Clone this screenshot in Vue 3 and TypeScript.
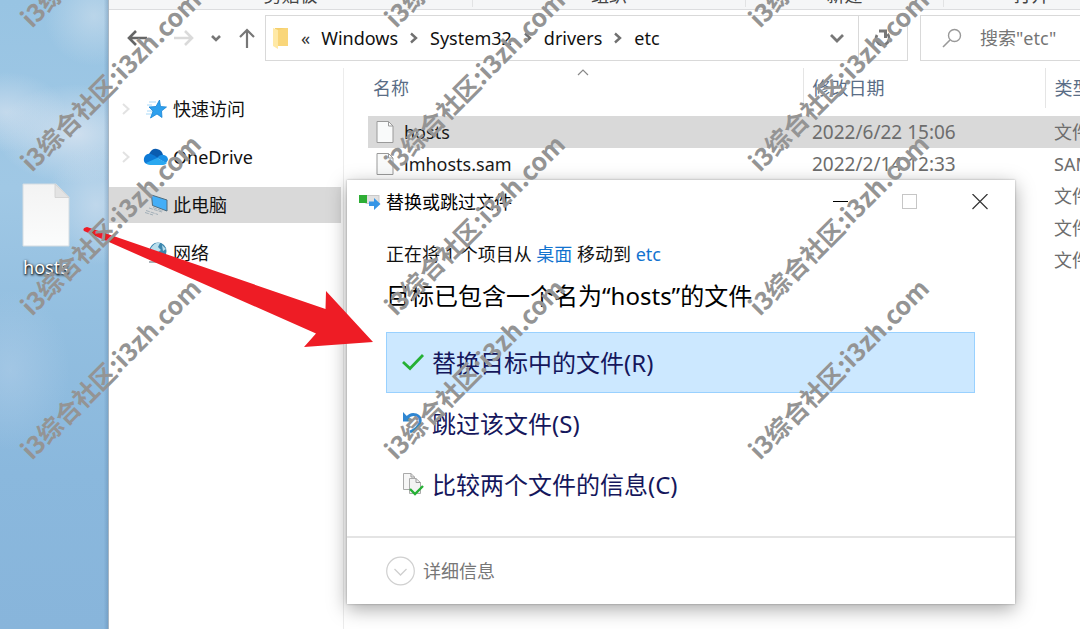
<script setup lang="ts">
interface TreeItem {
  label: string
  icon: 'star' | 'cloud' | 'pc' | 'net'
  expandable: boolean
  active: boolean
}
interface FileRow {
  name: string
  date: string
  type: string
}

const groups: string[] = ['剪贴板', '组织', '新建', '打开']
const crumbs: string[] = ['Windows', 'System32', 'drivers', 'etc']

const tree: TreeItem[] = [
  { label: '快速访问', icon: 'star', expandable: true, active: false },
  { label: 'OneDrive', icon: 'cloud', expandable: true, active: false },
  { label: '此电脑', icon: 'pc', expandable: false, active: true },
  { label: '网络', icon: 'net', expandable: false, active: false },
]

const files: FileRow[] = [
  { name: 'hosts', date: '2022/6/22 15:06', type: '文件' },
  { name: 'lmhosts.sam', date: '2022/2/14 12:33', type: 'SAM 文件' },
  { name: '', date: '', type: '文件' },
  { name: '', date: '', type: '文件' },
  { name: '', date: '', type: '文件' },
]

const markText = 'i3综合社区:i3zh.com'
const marks = [0, 1, 2].flatMap((c) =>
  [0, 1, 2, 3].map((r) => ({ x: 32 + c * 364, y: 29 + r * 144 })),
)
</script>

<template>
  <div class="desktop">
    <aside class="wallpaper">
      <a class="shortcut" href="#">
        <svg width="48" height="64" viewBox="0 0 48 64" aria-hidden="true">
          <defs>
            <linearGradient id="paper" x1="0" y1="0" x2="0" y2="1">
              <stop offset="0" stop-color="#f3f3f3" />
              <stop offset="1" stop-color="#fbfcfc" />
            </linearGradient>
          </defs>
          <path d="M1 1H34L47 14V63H1Z" fill="url(#paper)" stroke="#d5dde2" />
          <path d="M33 1V14.500H47Z" fill="#e3e3e3" stroke="#cfcfcf" stroke-width=".8" />
        </svg>
        <span>hosts</span>
      </a>
    </aside>

    <main class="explorer">
      <div class="ribbon">
        <span v-for="g in groups" :key="g">{{ g }}</span>
      </div>

      <div class="toolbar">
        <nav class="history">
          <button type="button" aria-label="后退">
            <svg width="22" height="22" viewBox="0 0 22 22"><path d="M21 11H3M10 4L3 11L10 18" fill="none" stroke="#666" stroke-width="2.600" /></svg>
          </button>
          <button type="button" aria-label="前进">
            <svg width="22" height="22" viewBox="0 0 22 22"><path d="M1 11H19M12 4L19 11L12 18" fill="none" stroke="#dadada" stroke-width="2.600" /></svg>
          </button>
          <button type="button" class="small" aria-label="最近位置">
            <svg width="12" height="12" viewBox="0 0 12 12"><path d="M2 4L6 8L10 4" fill="none" stroke="#777" stroke-width="2.600" /></svg>
          </button>
          <button type="button" aria-label="上移">
            <svg width="20" height="22" viewBox="0 0 20 22"><path d="M10 21V3M3 10L10 3L17 10" fill="none" stroke="#777" stroke-width="2.200" /></svg>
          </button>
        </nav>
        <div class="address">
          <svg class="folder" width="18" height="24" viewBox="0 0 18 24" aria-hidden="true">
            <path d="M3 2H16V20H3Z" fill="#f5cf6c" />
            <path d="M1 2L6 4V23L1 20Z" fill="#ffe9a6" />
            <path d="M6 4L13 2H16V20H6Z" fill="#f9d67a" />
          </svg>
          <span class="more">«</span>
          <template v-for="(c, i) in crumbs" :key="c">
            <svg v-if="i > 0" class="sep" width="8" height="12" viewBox="0 0 8 12" aria-hidden="true"><path d="M1 1.500L6 6L1 10.500" fill="none" stroke="#707070" stroke-width="2.400" /></svg>
            <a href="#">{{ c }}</a>
          </template>
          <button type="button" class="drop" aria-label="以前的位置">
            <svg width="16" height="12" viewBox="0 0 16 12"><path d="M2 3L8 9L14 3" fill="none" stroke="#777" stroke-width="2.800" /></svg>
          </button>
          <button type="button" class="refresh" aria-label="刷新">
            <svg width="20" height="20" viewBox="0 0 20 20"><path d="M4 7A6.500 6.500 0 1 0 14.500 6" fill="none" stroke="#777" stroke-width="2.800" /><path d="M6 3H12.500V10" fill="none" stroke="#777" stroke-width="3" /></svg>
          </button>
        </div>
        <label class="search">
          <svg width="20" height="20" viewBox="0 0 20 20" aria-hidden="true"><circle cx="12.500" cy="7.500" r="6" fill="none" stroke="#999" stroke-width="1.400" /><path d="M8 12L1 19" stroke="#999" stroke-width="1.600" /></svg>
          <input type="search" placeholder="搜索&quot;etc&quot;" aria-label="搜索" />
        </label>
      </div>

      <div class="body">
        <ul class="tree">
          <li v-for="t in tree" :key="t.label" :class="{ active: t.active }">
            <svg class="twisty" width="10" height="14" viewBox="0 0 10 14" aria-hidden="true">
              <path v-if="t.expandable" d="M2 2L7.500 7L2 12" fill="none" stroke="#e2e2e2" stroke-width="2" />
            </svg>
            <svg v-if="t.icon === 'star'" class="ico" width="26" height="22" viewBox="0 0 26 22" aria-hidden="true">
              <path d="M16.500 2L17.500 8.500L23.500 9L18.500 13L19 19.500L14 16L7.500 20L10 13L6 9L13 8.500Z" fill="#2da0ee" stroke="#1784d6" stroke-width=".8" />
              <path d="M6 4H13M4 7H9M4 13H9M3 16H8" stroke="#a8d9f8" />
            </svg>
            <svg v-else-if="t.icon === 'cloud'" class="ico" width="26" height="22" viewBox="0 0 26 22" aria-hidden="true">
              <path d="M6 8Q9 2 14 3Q19 4 20 9L13 13Z" fill="#0a5cb0" />
              <path d="M4 18Q0 17 1 12Q3 7 8 8Q11 9 15 12L9 18Z" fill="#0d7ad6" />
              <path d="M14 12Q17 8 21 9Q25 10 25 14L23 17Z" fill="#1a90e6" />
              <path d="M3 17L14 12L24 17Q22 19 20 19H7Q4 19 3 17Z" fill="#2aa8f0" />
            </svg>
            <svg v-else-if="t.icon === 'pc'" class="ico" width="26" height="22" viewBox="0 0 26 22" aria-hidden="true">
              <path d="M8.500 1L24 6V17L9.500 11.500Z" fill="#44aef7" stroke="#506b7c" />
              <path d="M6 14L19 18M3 16.500L15 20.500M10 13.500L20 17M2 18.500L10 21" stroke="#a2afb8" stroke-width="1" stroke-dasharray="4 1" />
            </svg>
            <svg v-else class="ico" width="26" height="22" viewBox="0 0 26 22" aria-hidden="true">
              <circle cx="15" cy="9" r="8.500" fill="#3b86ae" />
              <path d="M8 6Q12 0 17 1L15 5L18 8L12 12L7 10ZM19 3L23 7L20 9Z" fill="#b9deec" />
              <path d="M6 20H14" stroke="#aab4ba" stroke-width="2" />
            </svg>
            <a href="#">{{ t.label }}</a>
          </li>
        </ul>

        <section class="listing">
          <table>
            <colgroup>
              <col />
              <col class="c-date" />
              <col class="c-type" />
            </colgroup>
            <thead>
              <tr>
                <th>名称
                  <svg class="sort" width="12" height="7" viewBox="0 0 12 7" aria-hidden="true"><path d="M1 6L6 1L11 6" fill="none" stroke="#888" stroke-width="1.200" /></svg>
                </th>
                <th>修改日期</th>
                <th>类型</th>
              </tr>
            </thead>
            <tbody>
              <tr v-for="(f, i) in files" :key="i" :class="{ selected: i === 0 }">
                <td>
                  <div v-if="f.name" class="file">
                    <svg width="18" height="22" viewBox="0 0 18 22" aria-hidden="true">
                      <path d="M1 .5H12.500L17 5V21.500H1Z" fill="#f9fafa" stroke="#9a9a9a" />
                      <path d="M12.500 .5V5H17" fill="none" stroke="#9a9a9a" />
                    </svg>
                    <span>{{ f.name }}</span>
                  </div>
                </td>
                <td class="date">{{ f.date }}</td>
                <td>{{ f.type }}</td>
              </tr>
            </tbody>
          </table>
        </section>
      </div>
    </main>

    <section class="dialog" role="dialog" aria-labelledby="dlg-title">
      <header>
        <svg width="24" height="18" viewBox="0 0 24 18" aria-hidden="true">
          <rect x="8" y="2.500" width="13" height="8" fill="#e1e1e1" stroke="#c9c9c9" />
          <rect x="1" y="2" width="8" height="8" fill="#2eae35" />
          <path d="M11 8.500H16V5L22.500 11L16 17V13H11Z" fill="#3796e6" />
        </svg>
        <span id="dlg-title">替换或跳过文件</span>
        <div class="controls">
          <button type="button" aria-label="最小化"><svg width="16" height="16" viewBox="0 0 16 16"><path d="M1 7.500H16" stroke="#000" /></svg></button>
          <button type="button" aria-label="最大化" disabled><svg width="16" height="16" viewBox="0 0 16 16"><rect x=".5" y=".5" width="14" height="14" fill="none" stroke="#c6c6c6" /></svg></button>
          <button type="button" aria-label="关闭"><svg width="16" height="16" viewBox="0 0 16 16"><path d="M.5 0L15.500 15M15.500 0L.5 15" stroke="#333" stroke-width="1.200" /></svg></button>
        </div>
      </header>
      <div class="content">
        <p>正在将 1 个项目从 <a href="#">桌面</a> 移动到 <a href="#">etc</a></p>
        <h1>目标已包含一个名为“hosts”的文件</h1>
        <div class="options">
          <button type="button" class="primary">
            <svg width="24" height="24" viewBox="0 0 24 24" aria-hidden="true"><path d="M2 11L9 17.500L22 4" fill="none" stroke="#25b034" stroke-width="2.800" /></svg>
            <span>替换目标中的文件(R)</span>
          </button>
          <button type="button">
            <svg width="24" height="24" viewBox="0 0 24 24" aria-hidden="true"><path d="M6 6Q10 1 15 3Q20 5 19 10Q18 16 9 20" fill="none" stroke="#2f86d2" stroke-width="3" /><path d="M2 0V9.500H11Z" fill="#2f86d2" /></svg>
            <span>跳过该文件(S)</span>
          </button>
          <button type="button">
            <svg width="24" height="24" viewBox="0 0 24 24" aria-hidden="true">
              <path d="M2.500 .5H10L13.500 4V16.500H2.500Z" fill="#f6f6f6" stroke="#aaa" />
              <path d="M8.500 5.500H15L19.500 9.500V20.500H8.500Z" fill="#f3f3f3" stroke="#aaa" />
              <path d="M10 .5V4H13.500M15 5.500V9.500H19.500" fill="none" stroke="#999" />
              <path d="M9 16L14 21L22 13" fill="none" stroke="#25b034" stroke-width="2.400" />
            </svg>
            <span>比较两个文件的信息(C)</span>
          </button>
        </div>
      </div>
      <footer>
        <button type="button">
          <svg width="30" height="30" viewBox="0 0 30 30" aria-hidden="true"><circle cx="14.500" cy="15" r="13.800" fill="none" stroke="#d0d0d0" stroke-width="1.200" /><path d="M8.500 13L14.500 19L20.500 13" fill="none" stroke="#cfcfcf" stroke-width="1.300" /></svg>
          <span>详细信息</span>
        </button>
      </footer>
    </section>

    <svg class="overlay" aria-hidden="true">
      <path d="M84 231Q82 228 87 227L112 235.500L325.500 309L326 291L373 342L304 347L316 333.500Z" fill="#ee1c25" />
      <text v-for="m in marks" :key="m.x + '-' + m.y" class="mark" :transform="`translate(${m.x} ${m.y}) rotate(-45)`">{{ markText }}</text>
    </svg>
  </div>
</template>

<style>
body {
  margin: 0;
}
</style>

<style scoped>
.desktop {
  position: relative;
  display: flex;
  min-height: 100vh;
  overflow: hidden;
  background: #fff;
  color: #111;
  font: 18px/24px "Noto Sans", "Noto Sans CJK SC", sans-serif;
}
button {
  display: flex;
  align-items: center;
  justify-content: center;
  border: 0;
  padding: 0;
  background: none;
  font: inherit;
  color: inherit;
}
a {
  color: inherit;
  text-decoration: none;
}
svg {
  display: block;
  flex: none;
}

.wallpaper {
  flex: none;
  box-sizing: border-box;
  width: 108px;
  padding-top: 183px;
  background:
    linear-gradient(90deg, transparent 96%, rgba(60, 100, 140, 0.25)),
    radial-gradient(50px 60px at 96px 205px, rgba(205, 222, 238, 0.7), transparent),
    radial-gradient(80px 50px at 76px 134px, rgba(215, 227, 240, 0.85), transparent),
    radial-gradient(60px 40px at 6px 112px, rgba(205, 222, 238, 0.8), transparent),
    radial-gradient(50px 50px at 94px 16px, rgba(200, 220, 236, 0.7), transparent),
    radial-gradient(60px 80px at 10px 370px, rgba(180, 208, 234, 0.5), transparent),
    linear-gradient(#98c4e3, #a0c8e5 30%, #93bfe0 50%, #8ab8dd 75%, #88b5db);
}
.shortcut {
  display: flex;
  flex-direction: column;
  align-items: center;
  gap: 8px;
  width: 92px;
  color: #fff;
  text-shadow: 1px 1px 3px #000, 0 1px 2px #222;
}

.explorer {
  flex: 1;
  min-width: 0;
  display: flex;
  flex-direction: column;
  border-left: 1px solid #a9b6c2;
}
.ribbon {
  display: grid;
  grid-template-columns: 364px 273px 198px 176px;
  grid-template-rows: 9px;
  align-items: end;
  height: 9px;
  overflow: hidden;
  background: #f5f6f7;
  border-bottom: 1px solid #dcdddf;
}
.ribbon span {
  margin-bottom: 2px;
  border-right: 1px solid #e2e3e4;
  text-align: center;
  color: #444;
}
.toolbar {
  display: flex;
  padding-top: 5px;
}
.history {
  flex: none;
  display: flex;
  align-items: center;
  gap: 15px;
  width: 156px;
  box-sizing: border-box;
  padding-left: 17px;
}
.history button:first-child {
  margin-right: 10px;
}
.address {
  flex: 1;
  min-width: 0;
  display: flex;
  align-items: center;
  gap: 11px;
  height: 44px;
  margin-right: 12px;
  padding-left: 6px;
  border: 1px solid #d9d9d9;
}
.more {
  color: #333;
}
.sep {
  margin: 0 1px;
}
.drop {
  margin-left: auto;
  width: 20px;
}
.refresh {
  width: 49px;
  height: 44px;
  border-left: 1px solid #d9d9d9;
}
.search {
  flex: none;
  width: 160px;
  box-sizing: border-box;
  display: flex;
  align-items: center;
  gap: 18px;
  padding-left: 21px;
  border: 1px solid #d9d9d9;
  border-right: 0;
}
.search input {
  min-width: 0;
  flex: 1;
  border: 0;
  padding: 0;
  background: none;
  font: inherit;
}
.search input::placeholder {
  color: #757575;
  opacity: 1;
}

.body {
  flex: 1;
  display: flex;
  padding-top: 7px;
}
.tree {
  flex: none;
  width: 234px;
  margin: 0;
  padding: 23px 0 0;
  list-style: none;
  border-right: 1px solid #ececec;
  display: flex;
  flex-direction: column;
  gap: 12px;
}
.tree li {
  display: flex;
  align-items: center;
  height: 36px;
  padding-left: 12px;
  margin-right: 2px;
}
.tree .active {
  background: #d9d9d9;
}
.tree .ico {
  margin: 0 4px 0 12px;
}
.listing {
  flex: 1;
  min-width: 0;
  padding-left: 24px;
}
table {
  width: 100%;
  table-layout: fixed;
  border-collapse: collapse;
}
.c-date {
  width: 242px;
}
.c-type {
  width: 35px;
}
th {
  position: relative;
  height: 40px;
  padding: 0 0 0 9px;
  font-weight: 400;
  text-align: left;
  color: #5a6d86;
  white-space: nowrap;
  overflow: hidden;
  border-right: 1px solid #e5e5e5;
}
th:first-child {
  padding-left: 5px;
}
th:last-child {
  border-right: 0;
}
.sort {
  position: absolute;
  top: 1px;
  left: 50%;
  margin-left: -8px;
}
thead::after {
  content: "";
  display: block;
  height: 8px;
}
td {
  height: 32px;
  padding: 0 0 0 9px;
  color: #6d6d6d;
  white-space: nowrap;
  overflow: hidden;
}
td:first-child {
  padding-left: 8px;
}
.date {
  font-size: 19px;
}
.selected {
  background: #d9d9d9;
}
.file {
  display: flex;
  gap: 10px;
  align-items: center;
  color: #1a1a1a;
}

.dialog {
  position: absolute;
  top: 180px;
  left: 347px;
  right: 65px;
  background: #fff;
  box-shadow: 0 0 2px rgba(0, 0, 0, 0.3), 0 5px 18px rgba(0, 0, 0, 0.35);
}
header {
  display: flex;
  align-items: center;
  gap: 4px;
  height: 44px;
  padding: 0 27px 0 11px;
  color: #000;
}
.controls {
  display: flex;
  gap: 54px;
  margin-left: auto;
}
.content {
  padding: 18px 40px 21px 39px;
  border-bottom: 2px solid #e4e4e4;
}
p,
h1 {
  margin: 0;
}
p a {
  color: #1273cf;
}
h1 {
  margin: 14px 0 20px;
  font-size: 24px;
  line-height: 32px;
  font-weight: 400;
  color: #000;
}
.options {
  display: flex;
  flex-direction: column;
}
.options button {
  justify-content: flex-start;
  gap: 7px;
  height: 61px;
  padding-left: 14px;
  border: 1px solid transparent;
  font-size: 24px;
  color: #15175c;
}
.options .primary {
  background: #cce8ff;
  border-color: #99d1ff;
}
footer {
  padding: 18px 39px;
}
footer button {
  gap: 7px;
  color: #777;
}
.overlay {
  position: absolute;
  inset: 0;
  width: 100%;
  height: 100%;
  pointer-events: none;
}
.mark {
  font: 700 25px "Noto Sans CJK SC", sans-serif;
  fill: #949494;
}
</style>
